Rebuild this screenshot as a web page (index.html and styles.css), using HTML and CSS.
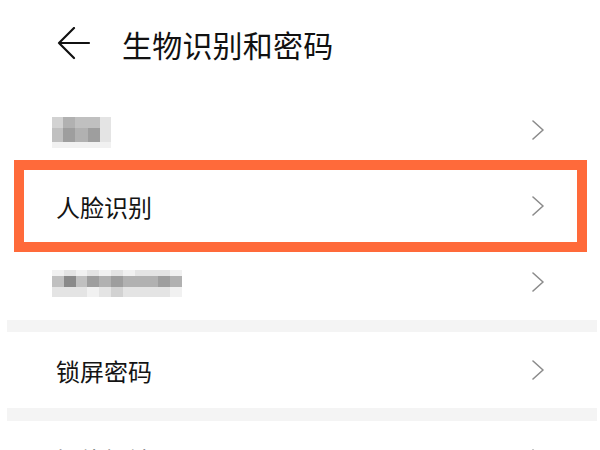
FILE: index.html
```html
<!DOCTYPE html>
<html lang="zh-CN">
<head>
  <meta charset="UTF-8" />
  <meta name="viewport" content="width=device-width, initial-scale=1.0"/>
  <title>生物识别和密码</title>
  <link rel="stylesheet" href="styles.css">
</head>
<body>

<div class="page">
  <!-- Header -->
  <div class="header">
    <svg class="back" width="34" height="34" viewBox="0 0 34 34">
      <path d="M32 16 H2 M17 1 L2 16 L17 31" fill="none" stroke="#111" stroke-width="2.2" stroke-linecap="round" stroke-linejoin="round"/>
    </svg>
    <h1>生物识别和密码</h1>
  </div>

  <div class="row">
    <div class="mosaic mosaic-short">
      <i class="g2"></i><i class="g4"></i><i class="g3"></i><i class="g3"></i><i class="g1"></i>
      <i class="g3"></i><i class="g5"></i><i class="g4"></i><i class="g5"></i><i class="g1"></i>
      <i class="g0"></i><i class="g0"></i><i class="g0"></i><i class="g0"></i><i class="g0"></i>
    </div>
    <svg class="chevron" width="12" height="20" viewBox="0 0 12 20"><polyline points="1,1 11,10 1,19" /></svg>
  </div>

  <div class="row highlighted">
    <span class="label">人脸识别</span>
    <svg class="chevron" width="12" height="20" viewBox="0 0 12 20"><polyline points="1,1 11,10 1,19" /></svg>
  </div>

  <div class="row">
    <div class="mosaic mosaic-long">
      <i class="g0"></i><i class="g1"></i><i class="g0"></i><i class="g1"></i><i class="g0"></i><i class="g1"></i><i class="g0"></i><i class="g1"></i><i class="g1"></i><i class="g1"></i><i class="g0"></i>
      <i class="g3"></i><i class="g6"></i><i class="g3"></i><i class="g5"></i><i class="g4"></i><i class="g5"></i><i class="g4"></i><i class="g4"></i><i class="g4"></i><i class="g5"></i><i class="g4"></i>
      <i class="g1"></i><i class="g1"></i><i class="g1"></i><i class="g0"></i><i class="g1"></i><i class="g2"></i><i class="g1"></i><i class="g1"></i><i class="g1"></i><i class="g1"></i><i class="g0"></i>
    </div>
    <svg class="chevron" width="12" height="20" viewBox="0 0 12 20"><polyline points="1,1 11,10 1,19" /></svg>
  </div>

  <div class="divider"></div>

  <div class="row">
    <span class="label">锁屏密码</span>
    <svg class="chevron" width="12" height="20" viewBox="0 0 12 20"><polyline points="1,1 11,10 1,19" /></svg>
  </div>

  <div class="divider"></div>

  <div class="row">
    <span class="label">智能解锁</span>
    <svg class="chevron" width="12" height="20" viewBox="0 0 12 20"><polyline points="1,1 11,10 1,19" /></svg>
  </div>
</div>

</body>
</html>
```

FILE: styles.css
```css
* {
  box-sizing: border-box;
  margin: 0;
  padding: 0;
}

body {
  font-family: "Noto Sans CJK SC", "Noto Sans", sans-serif;
  background: #ffffff;
  color: #111111;
  width: 600px;
  height: 450px;
  overflow: hidden;
}

.header {
  height: 92px;
  display: flex;
  align-items: center;
  padding-left: 57px;
  padding-bottom: 4px;
}

.back {
  display: block;
  margin-right: 31px;
}

h1 {
  font-size: 30px;
  font-weight: 400;
  letter-spacing: 0.2px;
  color: #111;
}

.row {
  height: 76px;
  display: flex;
  align-items: center;
  justify-content: space-between;
  padding: 0 56px 0 56px;
}

.label {
  font-size: 24px;
  color: #141414;
}

.chevron {
  display: block;
  fill: none;
  stroke: #8c8c8c;
  stroke-width: 1.6;
  stroke-linecap: round;
  stroke-linejoin: round;
}

/* Orange highlight frame */
.highlighted {
  position: relative;
}

.highlighted::after {
  content: "";
  position: absolute;
  top: -8px;
  bottom: -8px;
  left: 14px;
  right: 13px;
  border: 10px solid #ff6a3a;
}

.divider {
  height: 12px;
  margin: 0 3px 0 7px;
  background: #f4f4f4;
}

.divider + .row + .divider {
  height: 13px;
}

/* Blurred (pixelated) labels */
.mosaic {
  display: grid;
  margin-left: -4px;
}

.mosaic i {
  display: block;
}

.mosaic-short {
  grid-template-columns: 11px 12px 13px 12px 11px;
  grid-template-rows: 11px 14px 6px;
  margin-top: 4px;
}

.mosaic-long {
  grid-template-columns: repeat(11, 11.8px);
  grid-template-rows: 6px 11px 10px;
  margin-top: 2px;
}

.g0 { background: #f1f1f1; }
.g1 { background: #e4e4e4; }
.g2 { background: #d2d2d2; }
.g3 { background: #c0c0c0; }
.g4 { background: #b1b1b1; }
.g5 { background: #9e9e9e; }
.g6 { background: #8a8a8a; }
```
